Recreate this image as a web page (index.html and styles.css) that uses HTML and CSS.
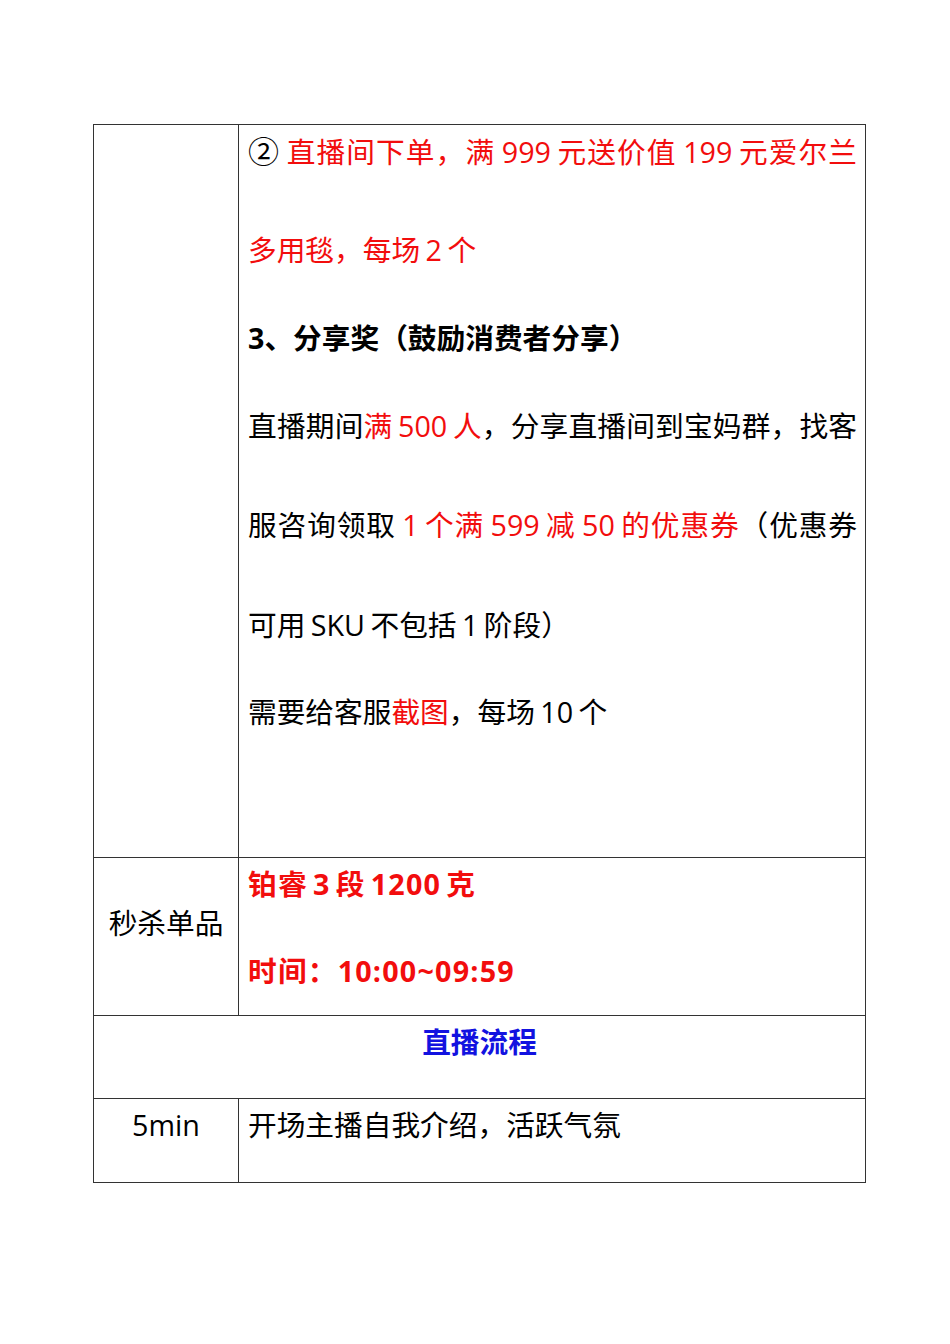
FILE: index.html
```html
<!DOCTYPE html>
<html lang="zh-CN">
<head>
<meta charset="utf-8">
<title>直播方案</title>
<link rel="stylesheet" href="styles.css">
</head>
<body>
<table class="plan">
  <colgroup><col class="c1"><col class="c2"></colgroup>
  <tr class="r1">
    <td class="label"></td>
    <td class="body">
      <span class="ln full"><span class="circ">②</span> <span class="red">直播间下单，满 999 元送价值 199 元爱尔兰</span></span>
      <span class="ln wrap red">多用毯，每场 2 个</span>
      <span class="ln para bold">3、分享奖（鼓励消费者分享）</span>
      <span class="ln para full">直播期间<span class="red">满 500 人</span>，分享直播间到宝妈群，找客</span>
      <span class="ln wrap full">服咨询领取 <span class="red">1 个满 599 减 50 的优惠券</span>（优惠券</span>
      <span class="ln wrap2">可用 SKU 不包括 1 阶段）</span>
      <span class="ln para3">需要给客服<span class="red">截图</span>，每场 10 个</span>
    </td>
  </tr>
  <tr class="r2">
    <td class="label mid">秒杀单品</td>
    <td class="body">
      <span class="ln red bold num">铂睿 3 段 1200 克</span>
      <span class="ln para3 red bold num">时间：10:00~09:59</span>
    </td>
  </tr>
  <tr class="r3">
    <td class="body head" colspan="2"><span class="ln blue bold">直播流程</span></td>
  </tr>
  <tr class="r4">
    <td class="label"><span class="ln">5min</span></td>
    <td class="body"><span class="ln">开场主播自我介绍，活跃气氛</span></td>
  </tr>
</table>
</body>
</html>
```

FILE: styles.css
```css
html, body {
  margin: 0;
  padding: 0;
  background: #ffffff;
}
body {
  font-family: "Open Sans", "Noto Sans CJK SC", sans-serif;
  font-size: 28.7px;
  color: #000000;
  word-spacing: -2px;
}
.plan {
  border-collapse: collapse;
  margin: 124px 0 0 93px;
  width: 772px;
  table-layout: fixed;
}
.c1 { width: 145px; }
.c2 { width: 627px; }
.plan td {
  border: 1px solid #333333;
  vertical-align: top;
  padding: 6px 8px 0 9px;
}
.r1 { height: 733px; }
.r2 { height: 158px; }
.r3 { height: 83px; }
.r4 { height: 84px; }
.label {
  text-align: center;
  padding-left: 0 !important;
  padding-right: 0 !important;
}
.label.mid { padding-top: 43px !important; }
.head { text-align: center; padding-left: 0 !important; padding-right: 0 !important; }
.ln {
  display: block;
  height: 40px;
  line-height: 40px;
}
.full {
  text-align: justify;
  text-align-last: justify;
}
.circ { font-size: 31px; }
.wrap { margin-top: 59px; }
.wrap2 { margin-top: 60px; }
.para { margin-top: 48px; }
.para3 { margin-top: 47px; }
.red { color: #f20d0d; }
.blue { color: #1212e0; }
.bold { font-weight: 700; }
.num { letter-spacing: 1.2px; word-spacing: -3.5px; }
```
